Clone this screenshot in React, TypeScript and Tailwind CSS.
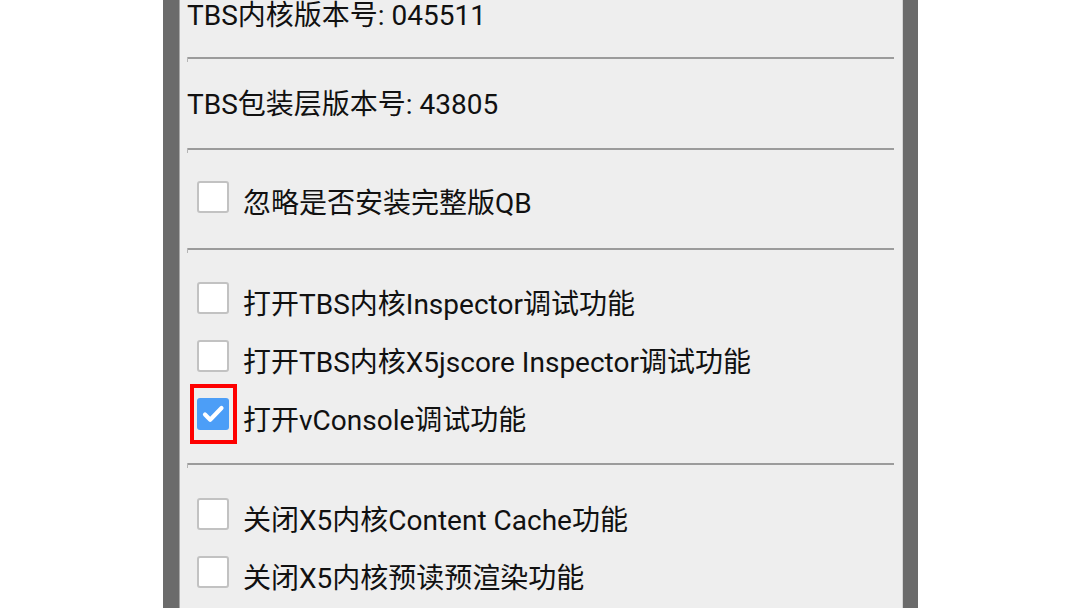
import React from "react";

const font = { fontFamily: '"Roboto", "Noto Sans CJK SC", sans-serif' };

function Separator() {
  return (
    <div className="relative h-[2px] shrink-0 bg-[#9b9b9b]">
      <div className="absolute left-0 top-0 w-[1px] h-[5px] bg-[#b5b5b5]" />
    </div>
  );
}

function Box({ checked, marked }: { checked?: boolean; marked?: boolean }) {
  return (
    <div className="relative ml-[10px] w-[32px] h-[32px] shrink-0">
      {checked ? (
        <div className="w-[32px] h-[32px] rounded-[3px] bg-[#4c9ef7] flex items-center justify-center">
          <svg width="32" height="32" viewBox="0 0 32 32">
            <path d="M8 16.5 L13.2 21.7 L24.5 10" fill="none" stroke="#ffffff" strokeWidth="4.2" strokeLinecap="round" strokeLinejoin="round" />
          </svg>
        </div>
      ) : (
        <div className="w-[32px] h-[32px] rounded-[3px] bg-white border-2 border-[#c2c2c2]" />
      )}
      {marked && (
        <div className="absolute left-[-7px] top-[-14px] w-[47px] h-[60px] border-4 border-[#fe0000]" />
      )}
    </div>
  );
}

function Item({ label, checked, marked }: { label: string; checked?: boolean; marked?: boolean }) {
  return (
    <div className="flex items-start h-[58px] shrink-0">
      <Box checked={checked} marked={marked} />
      <div className="ml-[14px] mt-[7px] text-[28px] leading-[32px] text-[#111] whitespace-nowrap">{label}</div>
    </div>
  );
}

export default function App() {
  return (
    <div className="w-[1080px] h-[608px] bg-white overflow-hidden flex pl-[163px]" style={font}>
      <div className="w-[16px] h-full shrink-0 bg-[#6b6b6b]" />
      <div className="w-[1px] h-full shrink-0 bg-[#a8a8a8]" />
      <div className="w-[722px] h-full shrink-0 overflow-hidden bg-[#eeeeee] pl-[7px] pr-[8px] flex flex-col">
        <div className="h-[57px] shrink-0 text-[28px] leading-[32px] text-[#111] whitespace-nowrap">TBS内核版本号: 045511</div>
        <Separator />
        <div className="h-[89px] shrink-0 pt-[30px] text-[28px] leading-[32px] text-[#111] whitespace-nowrap">TBS包装层版本号: 43805</div>
        <Separator />
        <div className="h-[98px] shrink-0 pt-[31px]">
          <Item label="忽略是否安装完整版QB" />
        </div>
        <Separator />
        <div className="h-[213px] shrink-0 pt-[32px]">
          <Item label="打开TBS内核Inspector调试功能" />
          <Item label="打开TBS内核X5jscore Inspector调试功能" />
          <Item label="打开vConsole调试功能" checked marked />
        </div>
        <Separator />
        <div className="shrink-0 pt-[33px]">
          <Item label="关闭X5内核Content Cache功能" />
          <Item label="关闭X5内核预读预渲染功能" />
        </div>
      </div>
      <div className="w-[1px] h-full shrink-0 bg-[#d4d4d4]" />
      <div className="w-[15px] h-full shrink-0 bg-[#6b6b6b]" />
    </div>
  );
}
